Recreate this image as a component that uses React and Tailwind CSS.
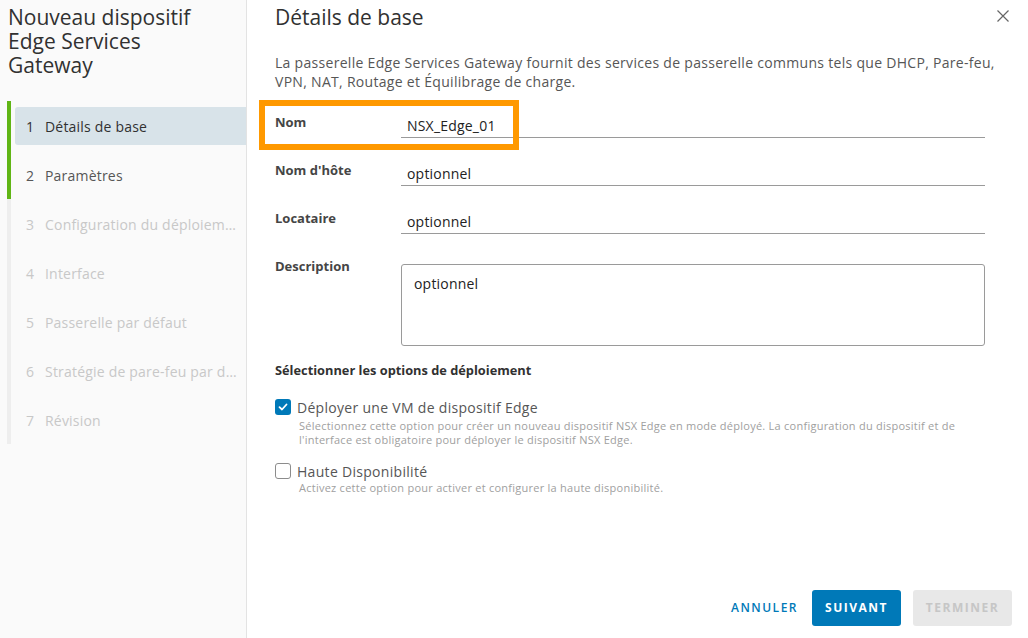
import React from "react";

const steps = [
  { n: 1, label: "Détails de base", state: "active" },
  { n: 2, label: "Paramètres", state: "done" },
  { n: 3, label: "Configuration du déploiement", state: "off" },
  { n: 4, label: "Interface", state: "off" },
  { n: 5, label: "Passerelle par défaut", state: "off" },
  { n: 6, label: "Stratégie de pare-feu par défaut", state: "off" },
  { n: 7, label: "Révision", state: "off" },
];

function Step({ n, label, state }) {
  const bar = state === "off" ? "border-[#eeeeee]" : "border-[#60b515]";
  const bg = state === "active" ? "bg-[#d8e3e9]" : "";
  const color =
    state === "active" ? "text-[#313131]" : state === "done" ? "text-[#565656]" : "text-[#c8c8c8]";
  return (
    <div className={`h-[49px] border-l-4 ${bar} pl-[4px] pt-[6px]`}>
      <div className={`h-[38px] rounded-l-[3px] ${bg} ${color} flex items-center pl-[11px] pr-[5px] text-[14px] tracking-[0.2px] min-w-0`}>
        <span className="w-[19px] shrink-0">{n}</span>
        <span className="truncate">{label}</span>
      </div>
    </div>
  );
}

function Field({ label, value }) {
  return (
    <div className="h-[48px] flex items-start">
      <div className="w-[126px] text-[13px] leading-[16px] font-bold text-[#454545]">{label}</div>
      <div className="w-[584px] h-[24px] border-b border-[#9a9a9a] pl-[6px] text-[14px] leading-[23px] tracking-[0.2px] text-[#222]">
        {value}
      </div>
    </div>
  );
}

function Checkbox({ checked }) {
  if (checked) {
    return (
      <div className="w-[16px] h-[16px] rounded-[3px] bg-[#0079b8] flex items-center justify-center shrink-0">
        <svg width="10" height="8" viewBox="0 0 10 8">
          <path d="M1.5 4.2 L4 6.5 L8.5 1.5" fill="none" stroke="white" strokeWidth="1.8" strokeLinecap="round" strokeLinejoin="round" />
        </svg>
      </div>
    );
  }
  return <div className="w-[16px] h-[16px] rounded-[3px] border border-[#8c8c8c] bg-white shrink-0" />;
}

export default function App() {
  return (
    <div className="w-[1028px] h-[638px] flex bg-white font-['Open_Sans','Liberation_Sans',sans-serif] overflow-hidden">
      <aside className="w-[247px] shrink-0 bg-[#fafafa] border-r border-[#e3e3e3] flex flex-col">
        <h1 className="pt-[5px] pl-[8px] text-[21px] leading-[24px] text-[#313131] font-normal">
          <span className="block">Nouveau dispositif</span>
          <span className="block">Edge Services</span>
          <span className="block">Gateway</span>
        </h1>
        <nav className="mt-[24px] ml-[7px]">
          {steps.map((s) => (
            <Step key={s.n} {...s} />
          ))}
        </nav>
      </aside>

      <main className="flex-1 flex flex-col pl-[28px] pr-[16px] min-w-0">
        <div className="flex-1">
          <div className="flex items-start justify-between pt-[5px]">
            <h2 className="text-[21px] leading-[24px] text-[#313131] font-normal">Détails de base</h2>
            <button className="mt-[5px] mr-[3px] text-[#666]" aria-label="Fermer">
              <svg width="12" height="12" viewBox="0 0 12 12">
                <path d="M0.5 0.5 L11.5 11.5 M11.5 0.5 L0.5 11.5" stroke="#666" strokeWidth="1.2" />
              </svg>
            </button>
          </div>

          <p className="mt-[24px] text-[14px] leading-[19px] tracking-[0.3px] text-[#565656] whitespace-nowrap">
            La passerelle Edge Services Gateway fournit des services de passerelle communs tels que DHCP, Pare-feu,
            <br />
            VPN, NAT, Routage et Équilibrage de charge.
          </p>

          <div className="mt-[23px] relative">
            <div className="absolute left-[-16px] top-[-14px] w-[260px] h-[50px] border-[6px] border-[#ff9900] pointer-events-none" />
            <Field label="Nom" value="NSX_Edge_01" />
            <Field label="Nom d'hôte" value="optionnel" />
            <Field label="Locataire" value="optionnel" />
            <div className="flex items-start">
              <div className="w-[126px] text-[13px] leading-[16px] font-bold text-[#454545]">Description</div>
              <div className="mt-[6px] w-[584px] h-[82px] border border-[#9a9a9a] rounded-[3px] pl-[12px] pt-[9px] text-[14px] leading-[19px] tracking-[0.2px] text-[#222]">
                optionnel
              </div>
            </div>
          </div>

          <div className="mt-[16px] text-[12.8px] leading-[16px] font-bold text-[#313131]">
            Sélectionner les options de déploiement
          </div>

          <div className="mt-[19px]">
            <label className="flex items-center h-[20px] gap-[6px] text-[14px] tracking-[0.3px] text-[#565656]">
              <Checkbox checked />
              <span>Déployer une VM de dispositif Edge</span>
            </label>
            <div className="mt-[2px] pl-[24px] text-[11px] leading-[14px] tracking-[0.25px] text-[#a0a0a0] whitespace-nowrap">
              Sélectionnez cette option pour créer un nouveau dispositif NSX Edge en mode déployé. La configuration du dispositif et de
              <br />
              l'interface est obligatoire pour déployer le dispositif NSX Edge.
            </div>
          </div>

          <div className="mt-[14px]">
            <label className="flex items-center h-[20px] gap-[6px] text-[14px] tracking-[0.3px] text-[#565656]">
              <Checkbox />
              <span>Haute Disponibilité</span>
            </label>
            <div className="mt-0 pl-[24px] text-[11px] leading-[14px] tracking-[0.25px] text-[#a0a0a0]">
              Activez cette option pour activer et configurer la haute disponibilité.
            </div>
          </div>
        </div>

        <footer className="flex justify-end items-center pb-[12px]">
          <button className="mr-[14px] text-[12px] font-semibold tracking-[1.5px] text-[#0079b8]">ANNULER</button>
          <button className="w-[89px] h-[36px] rounded-[3px] bg-[#0079b8] text-white text-[12px] font-bold tracking-[1.5px]">
            SUIVANT
          </button>
          <button className="ml-[12px] w-[99px] h-[36px] rounded-[3px] bg-[#e8e8e8] text-[#c6c6c6] text-[12px] font-bold tracking-[1.5px]">
            TERMINER
          </button>
        </footer>
      </main>
    </div>
  );
}
